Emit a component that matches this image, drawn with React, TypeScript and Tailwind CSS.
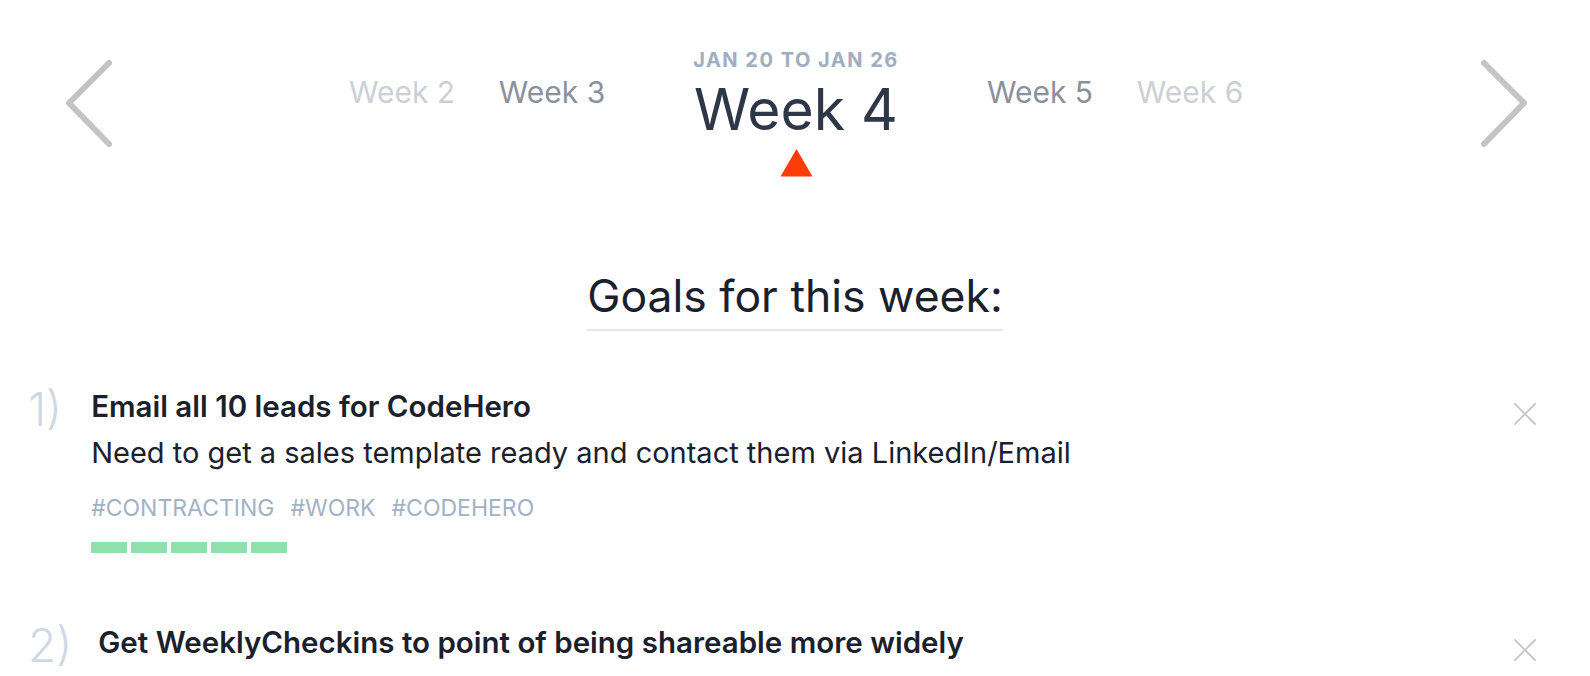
import React from "react";

function Chevron({ dir }: { dir: "left" | "right" }) {
  const pts = dir === "left" ? "47,5 7,45 47,86" : "6,5 46,45 6,86";
  return (
    <svg width="50" height="90" viewBox="0 0 50 90" fill="none">
      <polyline points={pts} stroke="#c4c4c4" strokeWidth="6" strokeLinecap="round" strokeLinejoin="round" />
    </svg>
  );
}

function XIcon() {
  return (
    <svg width="24" height="24" viewBox="0 0 24 24" fill="none">
      <path d="M2 2 L22 22 M22 2 L2 22" stroke="#c6c6c6" strokeWidth="1.8" strokeLinecap="square" />
    </svg>
  );
}

function Bars({ n }: { n: number }) {
  return (
    <div className="flex gap-[4px]">
      {Array.from({ length: n }).map((_, i) => (
        <div key={i} className="h-[11px] w-[36px] bg-[#90e0ac]" />
      ))}
    </div>
  );
}

export default function App() {
  const font = { fontFamily: "Inter, 'Noto Sans', sans-serif" };
  return (
    <div className="h-[676px] w-full overflow-hidden bg-white text-[#1a202c]" style={font}>
      {/* Header */}
      <div className="flex items-start pt-[48px]">
        <div className="ml-[62px] mt-[10px]">
          <Chevron dir="left" />
        </div>
        <div className="flex flex-1 items-start justify-center pl-[2px]">
          <div className="mt-[26px] w-[150px] text-center text-[30px] leading-[36px] text-[#ccd0d6]">Week 2</div>
          <div className="mt-[26px] w-[150px] text-center text-[30px] leading-[36px] text-[#8a909c]">Week 3</div>
          <div className="flex w-[338px] flex-col items-center">
            <div className="text-[20px] font-bold leading-[24px] tracking-[1.5px] text-[#a0aec0]">JAN 20 TO JAN 26</div>
            <div className="mt-[8px] text-[57px] leading-[60px] text-[#2d3748]">Week 4</div>
            <svg className="mt-[8px]" width="33" height="29" viewBox="0 0 33 29">
              <polygon points="16.5,1 32.5,28.5 0.5,28.5" fill="#fd3d08" />
            </svg>
          </div>
          <div className="mt-[26px] w-[150px] text-center text-[30px] leading-[36px] text-[#8a909c]">Week 5</div>
          <div className="mt-[26px] w-[150px] text-center text-[30px] leading-[36px] text-[#ccd0d6]">Week 6</div>
        </div>
        <div className="mr-[62px] mt-[10px]">
          <Chevron dir="right" />
        </div>
      </div>

      {/* Goals heading */}
      <div className="mt-[93px] flex justify-center">
        <div className="border-b-2 border-[#e2e8f0] pb-[7px] text-[44.5px] leading-[52px] text-[#1a202c]">
          Goals for this week:
        </div>
      </div>

      {/* Item 1 */}
      <div className="mt-[59px] flex items-start pl-[28px] pr-[53px]">
        <div className="mr-[29px] mt-[-4px] text-[46px] font-light leading-[46px] text-[#cfd8e3]">1)</div>
        <div className="flex-1">
          <div className="text-[29.5px] font-semibold leading-[32px] text-[#1a202c]">Email all 10 leads for CodeHero</div>
          <div className="mt-[15px] text-[29px] leading-[32px] text-[#1a202c]">
            Need to get a sales template ready and contact them via LinkedIn/Email
          </div>
          <div className="mt-[25px] flex gap-4 text-[23px] leading-[28px] text-[#a3b1c6]">
            <span>#CONTRACTING</span>
            <span>#WORK</span>
            <span>#CODEHERO</span>
          </div>
          <div className="mt-[20px]">
            <Bars n={5} />
          </div>
        </div>
        <div className="mt-[12px]">
          <XIcon />
        </div>
      </div>

      {/* Item 2 */}
      <div className="mt-[73px] flex items-start pl-[28px] pr-[53px]">
        <div className="mr-[26px] mt-[-4px] text-[46px] font-light leading-[46px] text-[#cfd8e3]">2)</div>
        <div className="flex-1">
          <div className="text-[29.5px] font-semibold leading-[32px] text-[#1a202c]">
            Get WeeklyCheckins to point of being shareable more widely
          </div>
        </div>
        <div className="mt-[12px]">
          <XIcon />
        </div>
      </div>
    </div>
  );
}
